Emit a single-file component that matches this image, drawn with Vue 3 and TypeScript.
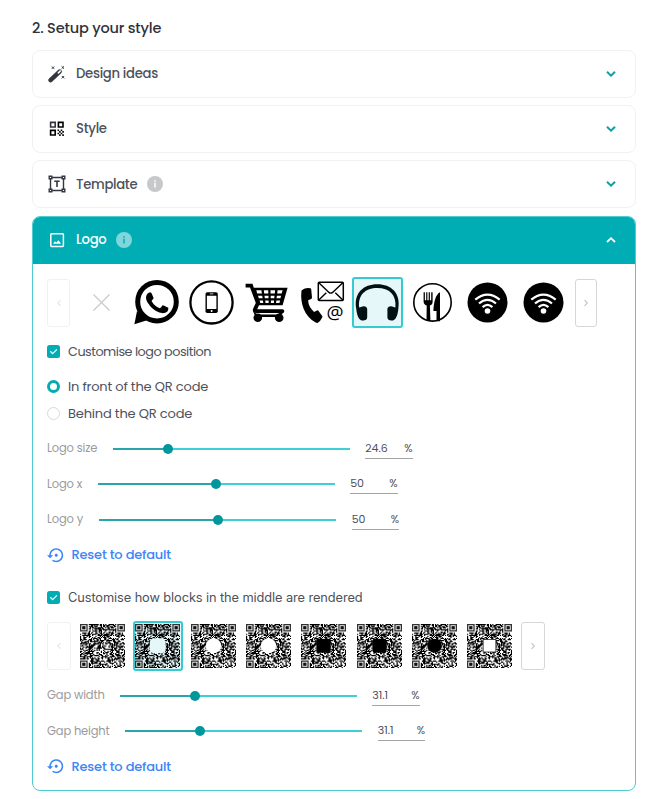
<script setup lang="ts">
import { ref } from 'vue'

interface Slider { label: string; width: number; pos: number; value: string }

const closedSections = [
  { id: 'ideas', label: 'Design ideas', info: false },
  { id: 'style', label: 'Style', info: false },
  { id: 'template', label: 'Template', info: true },
]

const logos = ['none', 'whatsapp', 'phone', 'cart', 'contact', 'headphones', 'food', 'wifi', 'wifi']
const selectedLogo = ref(5)

const gaps = ['none', 'round-square', 'round', 'circle', 'black-square', 'black-round', 'black-circle', 'framed']
const selectedGap = ref(1)

const logoSliders: Slider[] = [
  { label: 'Logo size', width: 50, pos: 23.4, value: '24.6' },
  { label: 'Logo x', width: 35, pos: 50, value: '50' },
  { label: 'Logo y', width: 36.5, pos: 50, value: '50' },
]
const gapSliders: Slider[] = [
  { label: 'Gap width', width: 57, pos: 31.7, value: '31.1' },
  { label: 'Gap height', width: 62.5, pos: 31.7, value: '31.1' },
]

const SIZE = 41

function buildQr(): string {
  let seed = 20231
  const rand = () => {
    seed = (seed + 0x6d2b79f5) | 0
    let t = Math.imul(seed ^ (seed >>> 15), 1 | seed)
    t = (t + Math.imul(t ^ (t >>> 7), 61 | t)) ^ t
    return ((t ^ (t >>> 14)) >>> 0) / 4294967296
  }
  let path = ''
  for (let y = 0; y < SIZE; y++) {
    for (let x = 0; x < SIZE; x++) {
      const dark = rand() < 0.52
      const finder = (x < 8 && y < 8) || (x > SIZE - 9 && y < 8) || (x < 8 && y > SIZE - 9)
      if (dark && !finder) path += `M${x} ${y}h1.08v1.08h-1.08z`
    }
  }
  return path
}
const qrPath = buildQr()
const finders = [[0, 0], [SIZE - 7, 0], [0, SIZE - 7]]
</script>

<template>
  <main class="page">
    <h2 class="title">2. Setup your style</h2>

    <section v-for="s in closedSections" :key="s.id" class="card">
      <svg v-if="s.id === 'ideas'" class="icon" viewBox="0 0 18 18">
        <path d="M2.6 15.2 11.6 6.6" stroke="#33363f" stroke-width="4.4" stroke-linecap="round" />
        <path d="M10.4 7.8 12.2 6" stroke="#fff" stroke-width="1.7" stroke-linecap="round" />
        <path d="m3.8 1.5 2.4 2.4m0-2.4L3.8 3.9M13.6 1.3 16 3.7m0-2.4-2.4 2.4M13.8 11l2.4 2.4m0-2.4-2.4 2.4" stroke="#33363f" stroke-width="1" />
      </svg>
      <svg v-else-if="s.id === 'style'" class="icon" viewBox="0 0 18 18" fill="none" stroke="#000" stroke-width="1.6">
        <path d="M2.6 2.4h4.6V7H2.6z" stroke="#33363f" />
        <path d="M10.4 2.4H15V7h-4.6zM2.6 10.4h4.6V15H2.6z" />
        <path d="M9.5 9.5h1.6v1.6H9.5zM12.7 9.5h1.6v1.6h-1.6zM11.1 11.1h1.6v1.6h-1.6zM14.3 11.1h1.6v1.6h-1.6zM9.5 12.7h1.6v1.6H9.5zM12.7 12.7h1.6v1.6h-1.6zM11.1 14.3h1.6v1.6h-1.6zM14.3 14.3h1.6v1.6h-1.6z" fill="#000" stroke="none" />
      </svg>
      <svg v-else class="icon" viewBox="0 0 18 18" fill="none" stroke="#33363f" stroke-width="1.4">
        <path d="M1.2 1.2h2.6v2.6H1.2zM14.2 1.2h2.6v2.6h-2.6zM1.2 14.2h2.6v2.6H1.2zM14.2 14.2h2.6v2.6h-2.6zM3.8 2.5h10.4M3.8 15.5h10.4M2.5 3.8v10.4M15.5 3.8v10.4" />
        <path d="M6.3 6.3h5.4M9 6.3v5.6" stroke-width="1.6" />
      </svg>
      <span class="card-label">{{ s.label }}</span>
      <svg v-if="s.info" class="info" viewBox="0 0 16 16">
        <circle cx="8" cy="8" r="8" fill="#c7c8ca" />
        <path d="M8 6.8v4.7M8 4.2v1.5" stroke="#fff" stroke-width="1.5" />
      </svg>
      <svg class="chevron" viewBox="0 0 12 8"><path d="m2 1.8 4 3.8 4-3.8" fill="none" stroke="#109fa3" stroke-width="2" /></svg>
    </section>

    <section class="panel">
      <header class="panel-head">
        <svg class="icon" viewBox="0 0 18 18">
          <rect x="2.8" y="2.8" width="12.6" height="12.6" rx=".8" fill="none" stroke="#fff" stroke-width="1.5" />
          <path d="M5 12.8 7 10.3l1.4 1.3 2-2.4 2.7 3.6z" fill="#fff" />
        </svg>
        <span class="card-label">Logo</span>
        <svg class="info" viewBox="0 0 16 16">
          <circle cx="8" cy="8" r="8" fill="#80d6da" />
          <path d="M8 6.8v4.7M8 4.2v1.5" stroke="#00adb5" stroke-width="1.5" />
        </svg>
        <svg class="chevron" viewBox="0 0 12 8"><path d="m2 6 4-3.8L10 6" fill="none" stroke="#fff" stroke-width="1.8" /></svg>
      </header>

      <div class="panel-body">
        <div class="carousel">
          <button class="nav disabled"><svg viewBox="0 0 6 8"><path d="M4.5 1.2 1.7 4l2.8 2.8" /></svg></button>
          <div class="items">
            <div v-for="(logo, i) in logos" :key="i" class="item" :class="{ selected: i === selectedLogo }" @click="selectedLogo = i">
              <svg viewBox="0 0 51 51">
                <path v-if="logo === 'none'" d="m17.5 17.5 16 16m0-16-16 16" stroke="#c9c9c9" stroke-width="1.1" />
                <template v-else-if="logo === 'whatsapp'">
                  <path d="M3.4 47.2 6 34l10 9.3z" />
                  <circle cx="26" cy="24.7" r="19.3" fill="#fff" stroke="#000" stroke-width="5" />
                  <path transform="translate(3.9 3.6) scale(1.85)" d="M17.472 14.382c-.297-.149-1.758-.867-2.03-.967-.273-.099-.471-.148-.67.15-.197.297-.767.966-.94 1.164-.173.199-.347.223-.644.075-.297-.15-1.255-.463-2.39-1.475-.883-.788-1.48-1.761-1.653-2.059-.173-.297-.018-.458.13-.606.134-.133.298-.347.446-.52.149-.174.198-.298.298-.497.099-.198.05-.371-.025-.52-.075-.149-.669-1.612-.916-2.207-.242-.579-.487-.5-.669-.51-.173-.008-.371-.01-.57-.01-.198 0-.52.074-.792.372-.272.297-1.04 1.016-1.04 2.479 0 1.462 1.065 2.875 1.213 3.074.149.198 2.096 3.2 5.077 4.487.709.306 1.262.489 1.694.625.712.227 1.36.195 1.871.118.571-.085 1.758-.719 2.006-1.413.248-.694.248-1.289.173-1.413-.074-.124-.272-.198-.57-.347" />
                </template>
                <template v-else-if="logo === 'phone'">
                  <circle cx="25.5" cy="25.4" r="21.1" fill="none" stroke="#000" stroke-width="2.3" />
                  <rect x="19.5" y="15.3" width="12.3" height="20.7" rx="1.8" />
                  <path d="M20.9 18.8h9.5v13.3h-9.5zM23.8 16.6h3.6v.7h-3.6z" fill="#fff" />
                  <circle cx="25.6" cy="34" r="1" fill="#fff" />
                </template>
                <template v-else-if="logo === 'cart'">
                  <path d="M4.6 6.8h6.9l1.3 3.9h33.8l-5 17.6H18l-1.8 4h25c2.8 0 2.8 3.6 0 3.6H15c-3 0-3.8-2-2.8-4.4l2.6-5.5-5.8-15.5H4.6z" />
                  <path d="m15.3 13.2.9 3.2h4.7l-.5-3.2zm7.5 0 .4 3.2h4.2l-.2-3.2zm6.7 0v3.2h4.3l.3-3.2zm7.1 0-.4 3.2h4.4l1-3.2zM17 18.7l.8 2.6h3.8l-.4-2.6zm6.5 0 .3 2.6h3.7v-2.6zm6.2 0v2.6h3.5l.3-2.6zm6.2 0-.4 2.6h3.9l.7-2.6zM18.6 23.6l.7 2.5h3l-.4-2.5zm5.6 0 .3 2.5h3.1v-2.5zm5.7 0v2.5h3l.2-2.5zm5.5 0-.4 2.5h3.4l.7-2.5z" fill="#fff" />
                  <circle cx="16.8" cy="40.8" r="4.3" /><circle cx="38.2" cy="40.8" r="4.3" /><path d="M16 37.6h22v2.500H16zM12 34l6 5h-4zM36 35h7l-3 3z" />
                </template>
                <template v-else-if="logo === 'contact'">
                  <rect x="21.3" y="5.2" width="25" height="18.4" rx="1" fill="none" stroke="#000" stroke-width="1.5" />
                  <path d="m21.8 5.8 10.2 9.6q1.8 1.5 3.6 0l10.2-9.6M21.8 23l7.5-7.3M45.8 23l-7.5-7.3" fill="none" stroke="#000" stroke-width="1.4" />
                  <path d="M5.1 13.1q3.5-3 8.2-1.9.8 0 .9 1l.8 8.4q0 1-.8 1.4l-3.1 1.3q.4 6.8 6 11.6l2.8-1.4q.9-.4 1.5.3l3.8 5.2q.6.8 0 1.6-1.6 3.5-4.4 5.2-1.2.4-2.5-.6C7.3 39.4 3.1 26 4.4 14.5q.1-.9.7-1.4z" />
                  <text x="38.1" y="42" text-anchor="middle" class="at">@</text>
                </template>
                <path v-else-if="logo === 'headphones'" d="M4.3 32C1.5 16 11.5 7.3 25.3 7.3S49 16 46.3 32c-.5 6-2.6 11-5.4 11.5-3.2.5-5.5-.7-5.5-3.2v-8.2c0-2.8 3.4-3.8 6.2-2.2l1.8.5C44.7 18 37.3 11 25.3 11S5.8 18 7.2 30.4l1.8-.5c2.8-1.6 6.2-.6 6.2 2.2v8.2c0 2.5-2.3 3.7-5.5 3.2C6.9 43 4.8 38 4.3 32z" fill="#001113" />
                <template v-else-if="logo === 'food'">
                  <circle cx="25.5" cy="25.4" r="18.7" fill="none" stroke="#000" stroke-width="1.6" />
                  <path d="M16.6 15.2h1.3v8h1.3v-8h1.2v8h1.3v-8h1.2v8h1.3v-8h1.4v9.5c0 2.2-1 3.2-2.7 3.8l.5 15.5h-3.9l.2-15.5c-2-.6-3.1-1.800-3.100-4zM33 15.2v29h-3.5V34h-3.1C26.8 25 28.5 17.5 33 15.2z" />
                </template>
                <template v-else>
                  <circle cx="25.5" cy="25.4" r="20" />
                  <path d="M13.3 22.7Q25.5 12.7 37.7 22.7M17 26.5q8.5-7.2 17 0M20.6 30.1q4.9-4.4 9.8 0" fill="none" stroke="#fff" stroke-width="2.2" />
                  <circle cx="25.5" cy="34" r="2.8" fill="#fff" />
                </template>
              </svg>
            </div>
          </div>
          <button class="nav next"><svg viewBox="0 0 6 8"><path d="M1.5 1.2 4.3 4 1.5 6.8" /></svg></button>
        </div>

        <label class="option first">
          <svg class="box" viewBox="0 0 13 13"><rect width="13" height="13" rx="2.5" fill="#00adb5" /><path d="m3.3 6.3 2.3 2.3 4.3-4.2" fill="none" stroke="#fff" stroke-width="1.3" /></svg>
          <span class="t-position">Customise logo position</span>
        </label>
        <label class="option radio-front"><i class="radio on"></i><span>In front of the QR code</span></label>
        <label class="option radio-behind"><i class="radio"></i><span>Behind the QR code</span></label>

        <div class="sliders">
          <div v-for="s in logoSliders" :key="s.label" class="slider">
            <span class="slider-label" :style="{ width: s.width + 'px' }">{{ s.label }}</span>
            <div class="track"><div class="fill" :style="{ width: s.pos + '%' }"></div><i class="thumb"></i></div>
            <div class="value"><span>{{ s.value }}</span><span>%</span></div>
          </div>
        </div>

        <button class="reset">
          <svg viewBox="0 0 24 24"><path d="M14 12c0-1.1-.9-2-2-2s-2 .9-2 2 .9 2 2 2 2-.9 2-2zm-2-9c-4.97 0-9 4.03-9 9H0l4 4 4-4H5c0-3.87 3.13-7 7-7s7 3.13 7 7-3.13 7-7 7c-1.51 0-2.91-.49-4.06-1.3l-1.42 1.44C8.04 20.3 9.94 21 12 21c4.97 0 9-4.03 9-9s-4.03-9-9-9z" /></svg>
          <span>Reset to default</span>
        </button>

        <label class="option second">
          <svg class="box" viewBox="0 0 13 13"><rect width="13" height="13" rx="2.5" fill="#00adb5" /><path d="m3.3 6.3 2.3 2.3 4.3-4.2" fill="none" stroke="#fff" stroke-width="1.3" /></svg>
          <span class="t-blocks">Customise how blocks in the middle are rendered</span>
        </label>

        <div class="carousel qr">
          <button class="nav disabled"><svg viewBox="0 0 6 8"><path d="M4.5 1.2 1.7 4l2.8 2.8" /></svg></button>
          <div class="items">
            <div v-for="(gap, i) in gaps" :key="gap" class="item" :class="{ selected: i === selectedGap }" @click="selectedGap = i">
              <svg class="code" viewBox="0 0 41 41" preserveAspectRatio="none">
                <path :d="qrPath" />
                <g v-for="(f, k) in finders" :key="k" :transform="`translate(${f[0]} ${f[1]})`">
                  <rect x=".6" y=".6" width="5.8" height="5.8" fill="none" stroke="#333" stroke-width="1.2" />
                  <rect x="2" y="2" width="3" height="3" fill="#111" />
                </g>
                <rect v-if="gap === 'round-square'" x="13.5" y="13.3" width="14.4" height="14" rx="4" fill="#e5f7f8" />
                <circle v-else-if="gap === 'round' || gap === 'circle'" cx="20.5" cy="20.3" r="7" fill="#fff" />
                <rect v-else-if="gap === 'black-square'" x="14" y="13.8" width="13" height="13" />
                <rect v-else-if="gap === 'black-round'" x="14" y="13.8" width="13" height="13" rx="2.5" />
                <circle v-else-if="gap === 'black-circle'" cx="20.5" cy="20.3" r="6.6" />
                <rect v-else-if="gap === 'framed'" x="14.7" y="14.5" width="11.6" height="11.6" fill="#fff" stroke="#333" stroke-width=".8" />
              </svg>
            </div>
          </div>
          <button class="nav"><svg viewBox="0 0 6 8"><path d="M1.5 1.2 4.3 4 1.5 6.8" /></svg></button>
        </div>

        <div class="sliders gap">
          <div v-for="s in gapSliders" :key="s.label" class="slider">
            <span class="slider-label" :style="{ width: s.width + 'px' }">{{ s.label }}</span>
            <div class="track"><div class="fill" :style="{ width: s.pos + '%' }"></div><i class="thumb"></i></div>
            <div class="value"><span>{{ s.value }}</span><span>%</span></div>
          </div>
        </div>

        <button class="reset">
          <svg viewBox="0 0 24 24"><path d="M14 12c0-1.1-.9-2-2-2s-2 .9-2 2 .9 2 2 2 2-.9 2-2zm-2-9c-4.97 0-9 4.03-9 9H0l4 4 4-4H5c0-3.87 3.13-7 7-7s7 3.13 7 7-3.13 7-7 7c-1.51 0-2.91-.49-4.06-1.3l-1.42 1.44C8.04 20.3 9.94 21 12 21c4.97 0 9-4.03 9-9s-4.03-9-9-9z" /></svg>
          <span>Reset to default</span>
        </button>
      </div>
    </section>
  </main>
</template>

<style>
body { background: #fff; }
</style>

<style scoped>
* { box-sizing: border-box; }
.page {
  width: 668px;
  height: 799px;
  overflow: hidden;
  padding: 0 32px;
  font-family: Poppins, Inter, sans-serif;
  font-feature-settings: 'cv11';
  color: #4d515b;
  white-space: nowrap;
}
.title {
  margin: 0;
  height: 50px;
  padding-top: 17.5px;
  font-size: 14.5px;
  line-height: 20px;
  font-weight: 500;
  letter-spacing: -0.17px;
  color: #2f323a;
}
.card {
  width: 604px;
  height: 47.5px;
  margin-bottom: 7.7px;
  border: 1px solid #f1f1f2;
  border-radius: 8px;
  display: flex;
  align-items: center;
  padding: 0 18px 0 15px;
}
.icon { width: 18px; height: 18px; flex: none; }
.card-label {
  margin-left: 10px;
  padding-top: 1px;
  font-size: 13.2px;
  font-weight: 500;
  line-height: 20px;
  letter-spacing: -0.3px;
}
.info { width: 16px; height: 16px; margin-left: 9.5px; flex: none; }
.chevron { width: 12px; height: 8px; margin-left: auto; flex: none; }
.panel {
  width: 604px;
  height: 575.5px;
  border: 1px solid #4fccd0;
  border-radius: 8px;
  overflow: hidden;
}
.panel-head {
  height: 47.5px;
  background: #00adb5;
  color: #fff;
  display: flex;
  align-items: center;
  padding: 0 18px 0 15px;
}
.panel-head .card-label { padding-top: 0; }
.panel-body { padding: 13px 14px 0; }
button {
  font-family: inherit;
  font-feature-settings: inherit;
  background: none;
  cursor: pointer;
  padding: 0;
}
.carousel { display: flex; align-items: center; height: 51px; }
.nav {
  width: 23px;
  height: 48px;
  flex: none;
  border: 1px solid #d6d6d6;
  border-radius: 3px;
  display: flex;
  align-items: center;
  justify-content: center;
}
.nav.next { width: 22px; }
.nav svg { width: 6px; height: 8px; fill: none; stroke: #c4c4c4; stroke-width: 1.1; }
.nav.disabled { border-color: #f1f1f1; }
.nav.disabled svg { stroke: #e6e6e6; }
.items { display: flex; gap: 4.25px; margin: 0 6px 0 5.5px; }
.item {
  position: relative;
  width: 51px;
  height: 51px;
  display: flex;
  align-items: center;
  justify-content: center;
  cursor: pointer;
}
.item svg { width: 51px; height: 51px; display: block; }
.item.selected { background: #e5f7f8; border-radius: 3px; }
.item.selected::after {
  content: '';
  position: absolute;
  inset: 0;
  border: 2px solid #35cbd1;
  border-radius: 3px;
}
.at { font: 500 19px 'Open Sans', sans-serif; }
.option { display: flex; align-items: center; height: 20px; font-size: 13px; letter-spacing: -0.18px; }
.option > span { margin-left: 8px; }
.option .t-position { font-size: 12.8px; letter-spacing: -0.5px; }
.option .t-blocks {
  font-family: Inter, sans-serif;
  font-feature-settings: normal;
  font-size: 12.8px;
  letter-spacing: -0.09px;
}
.box { width: 13px; height: 13px; flex: none; }
.first { margin-top: 13.5px; }
.radio-front { margin-top: 15px; }
.radio-behind { margin-top: 7px; }
.second { margin-top: 22px; }
.radio { width: 13px; height: 13px; border-radius: 50%; border: 1px solid #d9d9d9; flex: none; }
.radio.on { border: 3px solid #00adb5; }
.sliders { margin-top: 7.5px; }
.slider { height: 35.4px; display: flex; align-items: center; }
.slider-label { font-size: 11.5px; letter-spacing: -0.17px; color: #9b9b9b; flex: none; }
.track {
  width: 237px;
  height: 2px;
  margin-left: 15.5px;
  background: #3fd0d5;
  display: flex;
  align-items: center;
  flex: none;
}
.fill { height: 2px; background: #2aa5a9; flex: none; }
.thumb { width: 10px; height: 10px; margin-left: -5px; border-radius: 50%; background: #00979c; flex: none; }
.value {
  width: 47.5px;
  height: 20px;
  margin-left: 15.7px;
  border-bottom: 1px solid #a5a5a5;
  display: flex;
  justify-content: space-between;
  font-size: 11px;
  line-height: 18px;
}
.reset {
  display: flex;
  align-items: center;
  height: 20px;
  margin-top: 7.8px;
  border: 0;
  color: #3c86f5;
  font-size: 13px;
  font-weight: 500;
  letter-spacing: -0.2px;
}
.reset svg { width: 18.5px; height: 18.5px; fill: currentColor; }
.reset span { margin-left: 6px; }
.carousel.qr { height: 50px; margin-top: 14px; }
.qr .nav { width: 24px; }
.qr .items { gap: 5.3px; margin: 0 6px 0 6.6px; }
.qr .item { width: 50px; height: 50px; }
.qr .code { width: 45px; height: 44px; }
.sliders.gap { margin-top: 7px; }
</style>
